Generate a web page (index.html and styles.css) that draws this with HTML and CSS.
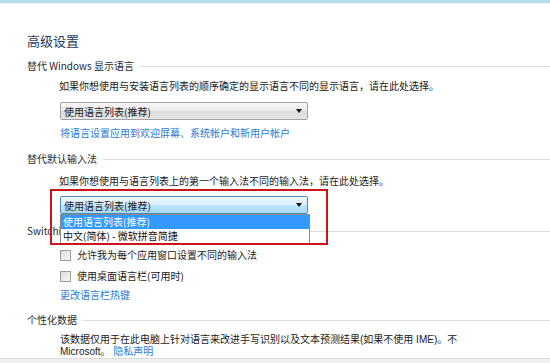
FILE: index.html
```html
<!DOCTYPE html>
<html lang="zh-CN">
<head>
    <meta charset="UTF-8">
    <title>高级设置</title>
    <link rel="stylesheet" href="styles.css">
</head>
<body>
    <div class="topbar"></div>

    <div class="content">
        <h1 class="title">高级设置</h1>

        <div class="group-head"><span>替代 Windows 显示语言</span></div>
        <p class="desc">如果你想使用与安装语言列表的顺序确定的显示语言不同的显示语言，请在此处选择。</p>
        <div class="indent">
            <div class="combo">
                <span>使用语言列表(推荐)</span>
                <span class="arrow"></span>
            </div>
        </div>
        <a class="link indent" href="#">将语言设置应用到欢迎屏幕、系统帐户和新用户帐户</a>

        <div class="group-head head-2"><span>替代默认输入法</span></div>
        <p class="desc desc-2">如果你想使用与语言列表上的第一个输入法不同的输入法，请在此处选择。</p>
        <div class="indent">
            <div class="combo-wrap">
                <div class="combo focused">
                    <span>使用语言列表(推荐)</span>
                    <span class="arrow"></span>
                </div>
                <ul class="droplist">
                    <li class="selected">使用语言列表(推荐)</li>
                    <li>中文(简体) - 微软拼音简捷</li>
                </ul>
                <div class="redbox"></div>
            </div>
        </div>

        <div class="group-head head-3"><span>Switchi</span></div>
        <label class="check indent cb-1"><span class="box"></span>允许我为每个应用窗口设置不同的输入法</label>
        <label class="check indent cb-2"><span class="box"></span>使用桌面语言栏(可用时)</label>
        <a class="link indent link-2" href="#">更改语言栏热键</a>

        <div class="group-head head-4"><span>个性化数据</span></div>
        <div class="privacy indent">
            <div>该数据仅用于在此电脑上针对语言来改进手写识别以及文本预测结果(如果不使用 IME)。不</div>
            <div>Microsoft。 <a class="link" href="#">隐私声明</a></div>
        </div>
    </div>

    <div class="footer"></div>
</body>
</html>
```

FILE: styles.css
```css
html, body {
    margin: 0;
    padding: 0;
}

body {
    width: 550px;
    height: 363px;
    overflow: hidden;
    background: #ffffff;
    font-family: "Noto Sans CJK SC", "Noto Sans", sans-serif;
    font-size: 10px;
    color: #1a1a1a;
}

.topbar {
    height: 3px;
    background: #b4dcea;
    border-bottom: 1px solid #e4f2f7;
}

.content {
    padding-left: 27px;
}

.title {
    margin: 29px 0 0;
    font-size: 13px;
    font-weight: normal;
    line-height: 16px;
    color: #1e395b;
}

.group-head {
    display: flex;
    align-items: center;
    gap: 6px;
    height: 14px;
    line-height: 14px;
    margin-top: 10px;
    color: #2a2a2a;
}

.group-head::after {
    content: "";
    flex: 1;
    border-top: 1px solid #d8dde2;
}

.head-2 { margin-top: 12px; }
.head-3 { margin-top: 10px; }
.head-4 { margin-top: 11px; }

.desc {
    margin: 6px 0 0 32px;
    line-height: 14px;
}

.desc-2 { margin-top: 8px; }

.indent {
    margin-left: 33px;
}

.combo {
    display: flex;
    align-items: center;
    justify-content: space-between;
    box-sizing: border-box;
    width: 248px;
    height: 18px;
    margin-top: 9px;
    padding: 0 5px 0 3px;
    border: 1px solid #a3a3a3;
    border-radius: 2px;
    background: linear-gradient(#f6f6f6 0%, #eaeaea 50%, #dcdcdc 51%, #e6e6e6 100%);
}

.combo.focused {
    margin-top: 8px;
    border-color: #4f8ab8;
    background: linear-gradient(#eaf6fd 0%, #d9f0fc 50%, #bee6fd 51%, #a7d9f5 100%);
}

.arrow {
    width: 0;
    height: 0;
    border-left: 3px solid transparent;
    border-right: 3px solid transparent;
    border-top: 4px solid #111;
}

.link {
    display: block;
    margin-top: 6px;
    line-height: 14px;
    color: #2a7bcf;
    text-decoration: none;
}

.combo-wrap {
    position: relative;
    width: 248px;
}

.droplist {
    position: absolute;
    left: 0;
    top: 18px;
    width: 250px;
    margin: 0;
    padding: 0;
    list-style: none;
    box-sizing: border-box;
    border: 1px solid #8a8a8a;
    background: #ffffff;
    z-index: 2;
}

.droplist li {
    height: 14px;
    line-height: 14px;
    padding-left: 2px;
    color: #111;
}

.droplist li.selected {
    background: #3399ff;
    color: #ffffff;
}

.redbox {
    position: absolute;
    left: -10px;
    top: -7px;
    width: 278px;
    height: 56px;
    box-sizing: border-box;
    border: 2px solid #c8161d;
    z-index: 3;
}

.check {
    display: flex;
    align-items: center;
    gap: 6px;
    height: 14px;
    line-height: 14px;
}

.cb-1 { margin-top: 10px; }
.cb-2 { margin-top: 7px; }

.box {
    width: 9px;
    height: 9px;
    border: 1px solid #9c9c9c;
    background: linear-gradient(135deg, #dcdcdc, #f8f8f8);
}

.link-2 { margin-top: 5px; }

.privacy {
    margin-top: 7px;
    font-family: "Liberation Sans", "Noto Sans CJK SC", sans-serif;
    line-height: 12px;
    white-space: nowrap;
}

.privacy .link {
    display: inline;
    margin: 0;
    line-height: 12px;
}

.footer {
    height: 10px;
    margin-top: 0;
    background: #f0f0f0;
    border-top: 1px solid #dcdcdc;
}
```
